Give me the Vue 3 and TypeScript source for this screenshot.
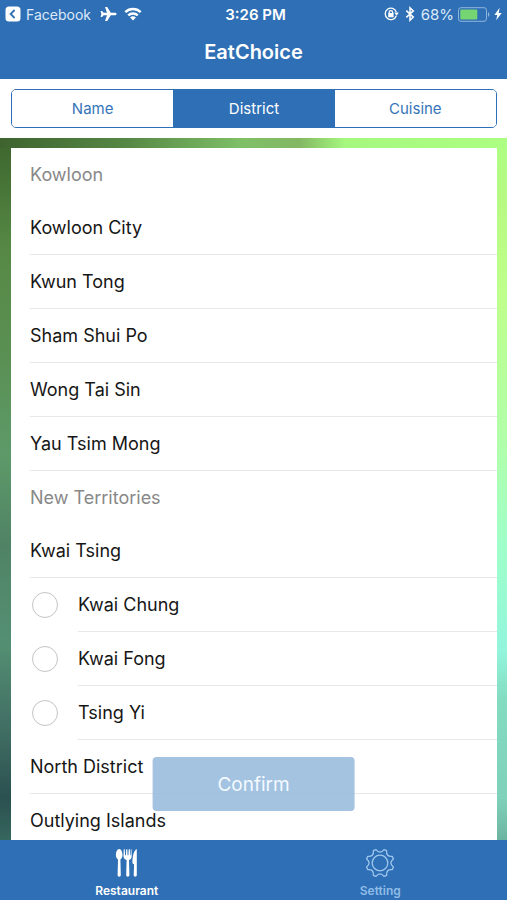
<script setup lang="ts">
import { ref } from 'vue'

interface Row {
  name: string
  areas?: string[]
}
interface Region {
  title: string
  rows: Row[]
}

const tabs = ['Name', 'District', 'Cuisine']
const activeTab = ref('District')
const selectedArea = ref('')

const regions: Region[] = [
  {
    title: 'Kowloon',
    rows: [
      { name: 'Kowloon City' },
      { name: 'Kwun Tong' },
      { name: 'Sham Shui Po' },
      { name: 'Wong Tai Sin' },
      { name: 'Yau Tsim Mong' },
    ],
  },
  {
    title: 'New Territories',
    rows: [
      { name: 'Kwai Tsing', areas: ['Kwai Chung', 'Kwai Fong', 'Tsing Yi'] },
      { name: 'North District' },
      { name: 'Outlying Islands' },
    ],
  },
]

// Outline of the eight-toothed gear, centred on the origin
const gearPath = (() => {
  const teeth = 8
  const points: string[] = []
  for (let i = 0; i < teeth; i++) {
    const mid = (i * 2 * Math.PI) / teeth + Math.PI / 8
    const at = (r: number, a: number) => `${(r * Math.cos(a)).toFixed(2)} ${(r * Math.sin(a)).toFixed(2)}`
    const valley = mid + Math.PI / 8
    points.push(`${i === 0 ? 'M' : 'L'}${at(14, mid - 0.1)}`)
    points.push(`L${at(14, mid + 0.1)}`)
    points.push(`Q${at(8.4, valley)} ${at(14, valley + Math.PI / 8 - 0.1)}`)
  }
  return points.join('') + 'Z'
})()
</script>

<template>
  <div class="app">
    <header class="top">
      <div class="status">
        <a class="back" href="#">
          <svg width="16" height="16" viewBox="0 0 16 16" aria-hidden="true">
            <rect x="0.5" y="0.5" width="15" height="15" rx="3.5" fill="#fff" />
            <path d="M9.6 4 5.6 8l4 4" fill="none" stroke="#2f6fb5" stroke-width="1.8" />
          </svg>
          <span>Facebook</span>
        </a>
        <svg class="plane" width="17" height="16" viewBox="0 0 17 16" aria-hidden="true">
          <path
            d="M16.6 8c0-.8-.9-1.300-2-1.300h-3.800L7.200.9H5l2 5.800H3.600L2.100 5H.6l.8 3-.8 3h1.500l1.500-1.700H7l-2 5.800h2.200l3.600-5.800h3.800c1.100 0 2-.5 2-1.300z"
            fill="#fff"
          />
        </svg>
        <svg width="18" height="14" viewBox="0 0 18 14" aria-hidden="true">
          <g fill="none" stroke="#fff" stroke-width="2.4">
            <path d="M1.300 5.200a11 11 0 0 1 15.400 0" />
            <path d="M4.200 8.400a7 7 0 0 1 9.600 0" />
          </g>
          <path d="M9 13.500 6.100 10.600a4.200 4.200 0 0 1 5.800 0z" fill="#fff" />
        </svg>
        <time class="clock">3:26 PM</time>
        <div class="indicators">
          <svg width="15" height="14" viewBox="0 0 15 14" aria-hidden="true">
            <g fill="none" stroke="#fff" stroke-width="1.300">
              <path d="M12.300 8.700A5.700 5.700 0 1 1 12.300 5" />
              <path d="M5.200 6.500V5.300a1.700 1.700 0 0 1 3.400 0v1.200" />
            </g>
            <rect x="4.200" y="6" width="5.400" height="4.200" rx="0.500" fill="#fff" />
            <path d="M10.300 5.600h4.500l-2.200 3.200z" fill="#fff" />
          </svg>
          <svg class="bluetooth" width="10" height="16" viewBox="0 0 10 16" aria-hidden="true">
            <path d="M1.300 4.600 8.300 11.100 5 14.200V1.800L8.300 4.900 1.300 11.400" fill="none" stroke="#fff" stroke-width="1.500" />
          </svg>
          <span class="percent">68%</span>
          <svg width="32" height="15" viewBox="0 0 32 15" aria-hidden="true">
            <rect x="0.500" y="0.700" width="28" height="13.600" rx="2.500" fill="none" stroke="#8fb5dc" />
            <rect x="2.300" y="2.500" width="17" height="10" rx="1" fill="#75d572" />
            <path d="M30 5.200c1.800.6 1.800 4 0 4.600z" fill="#8fb5dc" />
          </svg>
          <svg width="8" height="14" viewBox="0 0 8 14" aria-hidden="true">
            <path d="M5.600.8.400 7.900h2.900L2.200 13.200 7.700 5.900H4.700z" fill="#fff" />
          </svg>
        </div>
      </div>
      <h1>EatChoice</h1>
    </header>

    <nav class="filter" aria-label="Filter">
      <div class="segments">
        <button
          v-for="tab in tabs"
          :key="tab"
          type="button"
          :class="{ active: tab === activeTab }"
          :aria-pressed="tab === activeTab"
          @click="activeTab = tab"
        >
          {{ tab }}
        </button>
      </div>
    </nav>

    <main class="stage">
      <div class="list">
        <section v-for="region in regions" :key="region.title">
          <h2>{{ region.title }}</h2>
          <template v-for="row in region.rows" :key="row.name">
            <div class="row">{{ row.name }}</div>
            <label v-for="area in row.areas" :key="area" class="area">
              <input v-model="selectedArea" type="radio" name="area" :value="area" />
              <span>{{ area }}</span>
            </label>
          </template>
        </section>
      </div>
      <button class="confirm" type="button">Confirm</button>
    </main>

    <nav class="tabbar" aria-label="Main">
      <a class="current" href="#restaurant">
        <svg width="24" height="30" viewBox="0 0 24 30" aria-hidden="true">
          <g fill="#fff">
            <path d="M4.200 1C2 1 .9 4.300.9 7c0 2.300.9 3.700 2.100 4.400L2.600 27c0 2.200 3.200 2.200 3.200 0L5.400 11.400C6.600 10.700 7.500 9.300 7.500 7c0-2.700-1.100-6-3.300-6z" />
            <path d="M8.700 1.300h1l.4 6h.8l.3-6h1.100l.3 6h.8l.3-6h1.100l.4 6h.5l.1-6h.7l.2 7c0 2-1.100 3.200-2.700 3.700L14.400 27c0 2.200-3.200 2.200-3.200 0l.4-15c-1.800-.5-3.100-1.700-3.100-3.700z" />
            <path d="M21.800 1v26c0 2.200-3.100 2.200-3.100 0l.4-10.500-1.600-1.200C17.300 8.500 18.700 2.800 21.800 1z" />
          </g>
        </svg>
        <span>Restaurant</span>
      </a>
      <a href="#setting">
        <svg width="30" height="30" viewBox="-15 -15 30 30" aria-hidden="true">
          <g fill="none" stroke="#9fc8ee" stroke-width="1.300" stroke-linejoin="round">
            <path :d="gearPath" />
            <circle r="7.800" />
          </g>
        </svg>
        <span>Setting</span>
      </a>
    </nav>
  </div>
</template>

<style>
body {
  margin: 0;
}
</style>

<style scoped>
.app {
  display: flex;
  flex-direction: column;
  height: 100vh;
  overflow: hidden;
  font-family: Inter, Roboto, sans-serif;
  color: #161616;
  background: #fff;
}
.app *,
.app *::before {
  box-sizing: border-box;
}
button {
  font: inherit;
  padding: 0;
  cursor: pointer;
}
a {
  color: inherit;
  text-decoration: none;
}
.top {
  flex: none;
  color: #fff;
  background: #2f6fb5;
}
.status {
  position: relative;
  display: flex;
  align-items: center;
  height: 28px;
  padding: 0 5px;
  font-size: 15px;
}
.back {
  display: flex;
  align-items: center;
  gap: 5px;
  font-size: 14px;
  color: #dceafa;
}
.plane {
  margin: 0 7px 0 9px;
}
.clock {
  position: absolute;
  left: 50%;
  transform: translateX(-50%);
  margin-left: 2px;
  font-weight: 600;
  white-space: nowrap;
}
.indicators {
  display: flex;
  align-items: center;
  gap: 4px;
  margin-left: auto;
}
.bluetooth {
  margin: 0 2px;
}
.percent {
  color: #dceafa;
}
h1 {
  margin: 0;
  height: 51px;
  line-height: 48px;
  font-size: 20px;
  font-weight: 600;
  text-align: center;
}
.filter {
  flex: none;
  padding: 10px 10px 10px 11px;
}
.segments {
  display: grid;
  grid-template-columns: repeat(3, 1fr);
  height: 39px;
  overflow: hidden;
  border: 1px solid #2f6fb5;
  border-radius: 5px;
}
.segments button {
  border: 0;
  font-size: 15px;
  color: #3575b9;
  background: #fff;
}
.segments .active {
  color: #fff;
  background: #2f6fb5;
}
.stage {
  position: relative;
  flex: 1;
  min-height: 0;
  padding: 10px 10px 0 11px;
  overflow: hidden;
  background:
    linear-gradient(90deg, #3e632f, #568845 25%, #7fc067 48%, #83b763 59%, #a5f77e 68%, #adff83) top / 100% 10px no-repeat,
    linear-gradient(#3c652d, #578945 16%, #5a9054 32%, #5d9a69 45%, #508365 58%, #548f73 72%, #3f6c62 85%, #2b5050 94%, #36675d) left / 11px 100% no-repeat,
    linear-gradient(#adff83, #b6f982 8%, #bfff8b 22%, #b0ffab 44%, #9fffc9 58%, #92f5dc 73%, #83dcc0 80%, #7fd1ba 94%, #6cb4a1) right / 10px 100% no-repeat;
}
.list {
  height: 100%;
  overflow: hidden;
  background: #fff;
  font-size: 18px;
}
h2 {
  margin: 0;
  padding-left: 19px;
  height: 53px;
  line-height: 54px;
  font-size: inherit;
  font-weight: 400;
  color: #888;
}
.row {
  height: 54px;
  margin-left: 19px;
  line-height: 54px;
  border-bottom: 1px solid #e8e8ea;
}
.area {
  display: flex;
  align-items: center;
  gap: 20px;
  padding-left: 21px;
}
.area input {
  appearance: none;
  flex: none;
  width: 26px;
  height: 26px;
  margin: 0;
  border: 1px solid #c4c4c7;
  border-radius: 50%;
}
.area input:checked {
  border: 8px solid #2f6fb5;
}
.area span {
  flex: 1;
  height: 54px;
  line-height: 54px;
  border-bottom: 1px solid #e8e8ea;
}
.confirm {
  position: absolute;
  bottom: 29px;
  left: 50%;
  transform: translateX(-50%);
  width: 40%;
  height: 54px;
  border: 0;
  border-radius: 4px;
  font-size: 19px;
  color: #f4faff;
  background: rgba(150, 187, 221, 0.88);
}
.tabbar {
  flex: none;
  display: grid;
  grid-template-columns: 1fr 1fr;
  height: 60px;
  background: #2f6fb5;
}
.tabbar a {
  display: flex;
  flex-direction: column;
  align-items: center;
  padding-top: 8px;
  gap: 5px;
  font-size: 12px;
  line-height: 16px;
  font-weight: 600;
  color: #8fbce8;
}
.tabbar .current {
  color: #fff;
}
</style>
